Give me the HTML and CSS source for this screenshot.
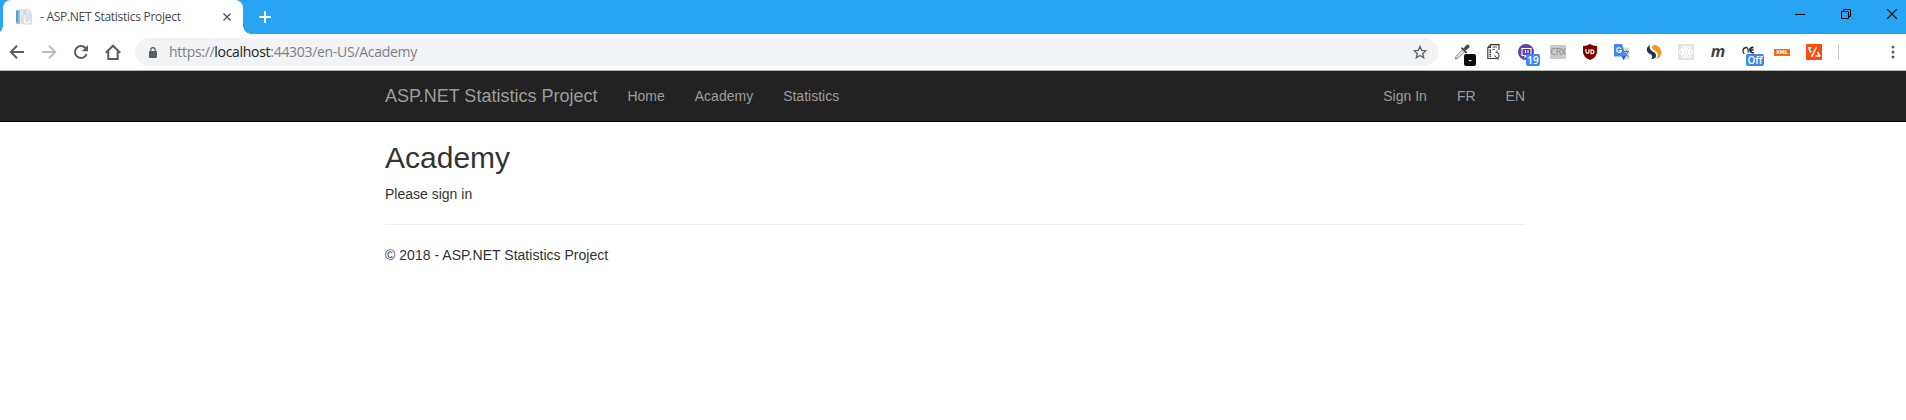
FILE: index.html
```html
<!DOCTYPE html>
<html lang="en">
<head>
<meta charset="utf-8">
<title>- ASP.NET Statistics Project</title>
<link rel="stylesheet" href="styles.css">
</head>
<body>
<div class="titlebar">
  <div class="tab">
    <svg class="favicon" width="16" height="16" viewBox="0 0 16 16"><path d="M0 1h4v14H0z" fill="#8fc0e0"/><path d="M0 2h2v11H0z" fill="#4f9fce"/><path d="M5 0h6l4 3v11H5z" fill="#e9edf1" stroke="#c3cbd3" stroke-width=".7"/><path d="M7 6h8v9H7z" fill="#f7f8fa" stroke="#b8c2cc" stroke-width=".7"/><path d="M7 2h3M7 4h4M9 8h5M9 10h5M9 12h4" stroke="#b3bdc7" stroke-width=".8"/></svg>
    <span class="tab-title">- ASP.NET Statistics Project</span>
    <svg class="tab-close" width="8" height="8" viewBox="0 0 8 8"><path d="M.5.5l7 7M7.5.5l-7 7" stroke="#505357" stroke-width="1.400"/></svg>
  </div>
  <svg class="new-tab" width="12" height="12" viewBox="0 0 12 12"><path d="M6 0v12M0 6h12" stroke="#fff" stroke-width="2"/></svg>
  <div class="window-controls">
    <svg width="10" height="10" viewBox="0 0 10 10"><path d="M0 5.500h10" stroke="#000"/></svg>
    <svg width="10" height="10" viewBox="0 0 10 10"><path d="M.5 2.500h7v7h-7zM2.500 2.500v-2h7v7h-2" fill="none" stroke="#000"/></svg>
    <svg width="10" height="10" viewBox="0 0 10 10"><path d="M0 0l10 10M10 0L0 10" stroke="#000" stroke-width="1.100"/></svg>
  </div>
</div>
<div class="toolbar">
  <div class="nav-buttons">
    <svg width="16" height="16" viewBox="0 0 16 16"><path d="M15 8H2M8 1.700L1.800 8 8 14.300" fill="none" stroke="#5a5d62" stroke-width="2"/></svg>
    <svg width="16" height="16" viewBox="0 0 16 16"><path d="M1 8h13M8 1.700L14.200 8 8 14.300" fill="none" stroke="#b9bbbe" stroke-width="2"/></svg>
    <svg width="16" height="16" viewBox="0 0 16 16"><path d="M13.600 10.200A6 6 0 1 1 12.300 3.800L13.500 5" fill="none" stroke="#5a5d62" stroke-width="2"/><path d="M15 1v6.200H8.800z" fill="#5a5d62"/></svg>
    <svg width="16" height="16" viewBox="0 0 16 16"><path d="M.8 8.800L8 1.700l7.200 7.100M3.300 7.500V15h9.400V7.500" fill="none" stroke="#5a5d62" stroke-width="2"/></svg>
  </div>
  <div class="omnibox">
    <svg width="8" height="11" viewBox="0 0 8 11"><rect y="4" width="8" height="7" rx="1" fill="#5a5d62"/><path d="M1.800 4.500V2.800a2.200 2.200 0 0 1 4.400 0v1.700" fill="none" stroke="#5a5d62" stroke-width="1.200"/></svg>
    <span class="url">https://<b>localhost</b>:44303/en-US/Academy</span>
    <svg class="star" width="14" height="14" viewBox="0 0 14 14"><path d="M7 1.400l1.700 3.900 4.200.4-3.200 2.800.95 4.200L7 10.500l-3.650 2.200.95-4.200L1.100 5.700l4.200-.4z" fill="none" stroke="#5a5d62" stroke-width="1.300"/></svg>
  </div>
  <div class="extensions">
    <div class="ext"><svg viewBox="0 0 16 16"><path d="M1.200 15l1-3L9 5.200 11 7.200 4.200 14z" fill="#e4e4e4" stroke="#888" stroke-width="1"/><path d="M8 3l5.500 5.500-1.500 1L7 4.500zM9.500 4.500L12.500 1q3-1.500 3 2L12 6.500z" fill="#444"/></svg><span class="badge badge-black">-</span></div>
    <div class="ext"><svg viewBox="0 0 16 16"><path d="M4.500.6H13V6M4.500.6L1.800 3.500v11H8M1.800 3.500h2.700V.6M8 14.500L13 15" fill="#fff" stroke="#333" stroke-width="1.100"/><path d="M4.200 5.500v7.500" stroke="#333" stroke-width="1.500" stroke-dasharray="1.500 .6"/><path d="M6.500 3h4.500M6.500 5.500H9M8.500 11.500l2 2.300q3 .2 2.500-2.800 0-2-2-2.500V6.500M9.500 8.500h1.500" fill="none" stroke="#555" stroke-width="1.100"/></svg></div>
    <div class="ext"><svg viewBox="0 0 16 16"><circle cx="8" cy="8" r="8" fill="#6441a4"/><path d="M4 4.500h9v5.300L11 11.500H8.500L7 13v-1.500H4z" fill="none" stroke="#fff" stroke-width="1.100"/><path d="M7.500 6.300V9M10 6.300V9" stroke="#fff" stroke-width="1.100"/></svg><span class="badge badge-blue">19</span></div>
    <div class="ext"><span class="crx">CRX</span></div>
    <div class="ext"><svg viewBox="0 0 16 16"><path d="M8 0q3 2 7 2v6q0 5-7 8-7-3-7-8V2q4 0 7-2z" fill="#800000"/><path d="M4 5.300v2.500a1.500 1.500 0 0 0 3 0V5.300M9 5.800h1a1.900 1.900 0 0 1 0 3.800H9z" fill="none" stroke="#fff" stroke-width="1.200"/></svg></div>
    <div class="ext"><svg viewBox="0 0 16 16"><path d="M8 3.500h7.500V15.500H9z" fill="#dcdcdc"/><path d="M10 7.500h5M12.500 6.500v1M14 7.500q-.5 3-3.500 5M11 8.500q1 3 3.500 4" fill="none" stroke="#65777d" stroke-width="1.100"/><path d="M7.500 12H12l-2.500 4z" fill="#2856b8"/><path d="M1 0h7l3.800 12.500H1q-1 0-1-1V1q0-1 1-1z" fill="#4285f4"/><path d="M7 4.800A2.300 2.300 0 1 0 7.300 6.500H5" fill="none" stroke="#fff" stroke-width="1.200"/></svg></div>
    <div class="ext"><svg viewBox="0 0 16 16"><path d="M4 1Q.5 3 .8 6c.4 3 2.700 3.400 4.200 4.500 1.800 1.300 1.500 3-.2 4.300C8 15.500 10.500 13.500 10 11c-.5-2.800-3.500-3.200-5.200-5C3.500 4.500 3.300 2.500 4 1z" fill="#263054"/><path d="M7.500 1.200c-2 .8-2 3.200-.2 4.600C9 7 11 7.500 11.500 9.700c.4 2-.2 3.800-1.300 5 3-.4 5.300-3 5.100-6.300C15 4 11.500.2 7.500 1.200z" fill="#f89a1c"/></svg></div>
    <div class="ext"><svg viewBox="0 0 16 16"><path d="M0 0h16v16H0z" fill="#e3e3e3"/><g fill="none" stroke="#fff" stroke-width="1.100"><ellipse cx="8" cy="8" rx="6.500" ry="2.600"/><ellipse cx="8" cy="8" rx="6.500" ry="2.600" transform="rotate(60 8 8)"/><ellipse cx="8" cy="8" rx="6.500" ry="2.600" transform="rotate(120 8 8)"/></g><circle cx="8" cy="8" r="1.200" fill="#fff"/></svg></div>
    <div class="ext"><span class="ext-m">m</span></div>
    <div class="ext"><svg viewBox="0 0 16 16"><path d="M5.500 3.500H4Q1 4 1 7q0 2 1.500 2.800M4.500 3.500q2.500 1.500 1.500 5" fill="none" stroke="#333" stroke-width="1.300"/><path d="M11.500 3.300Q7.500 3.500 8 6.500q1 2.500 4 2.500M7.500 6h4" fill="none" stroke="#222" stroke-width="1.700"/></svg><span class="badge badge-blue badge-off">Off</span></div>
    <div class="ext"><span class="xml">XML</span></div>
    <div class="ext"><svg viewBox="0 0 16 16"><rect width="16" height="16" rx="1" fill="#ff4a0d"/><path d="M5.500 3.800H2.500L5 8.500M10.500 3L5.500 12.800M11.500 8l2.200 4H9.500" fill="none" stroke="#fff" stroke-width="1.600" stroke-linejoin="round"/></svg></div>
  </div>
  <div class="separator"></div>
  <svg class="menu" width="4" height="14" viewBox="0 0 4 14"><g fill="#5a5d62"><circle cx="2" cy="2" r="1.500"/><circle cx="2" cy="7" r="1.500"/><circle cx="2" cy="12" r="1.500"/></g></svg>
</div>
<header class="navbar">
  <div class="container">
    <a class="brand">ASP.NET Statistics Project</a>
    <nav class="links"><a>Home</a><a>Academy</a><a>Statistics</a></nav>
    <nav class="links links-right"><a>Sign In</a><a>FR</a><a>EN</a></nav>
  </div>
</header>
<main class="content">
  <h2>Academy</h2>
  <p>Please sign in</p>
  <hr>
  <footer><p>© 2018 - ASP.NET Statistics Project</p></footer>
</main>
</body>
</html>
```
FILE: styles.css
```css
* { box-sizing: border-box; }
body { margin: 0; height: 420px; overflow: hidden; background: #fff; font: 14px/20px "Liberation Sans", Arial, sans-serif; color: #333; }
svg { display: block; flex: none; }

.titlebar { height: 34px; display: flex; background: #27a5f3; }
.tab { position: relative; width: 240px; margin-left: 3px; padding: 0 12px 0 13px; display: flex; align-items: center; background: #fff; border-radius: 8px 8px 0 0; }
.tab::before, .tab::after { content: ""; position: absolute; bottom: 0; width: 8px; height: 8px; }
.tab::before { left: -8px; background: radial-gradient(circle at 0 0, transparent 7.500px, #fff 8px); }
.tab::after { right: -8px; background: radial-gradient(circle at 100% 0, transparent 7.500px, #fff 8px); }
.tab-title { margin-left: 8px; font: 12px/16px "Open Sans", sans-serif; letter-spacing: -0.280px; color: #45494d; white-space: nowrap; }
.tab-close { margin-left: auto; }
.new-tab { margin: 11px 0 0 16px; }
.window-controls { display: flex; gap: 36px; margin: 9px 9px 0 auto; }

.toolbar { height: 37px; display: flex; align-items: center; border-bottom: 1px solid #b0b5b2; background: #fff; }
.nav-buttons { display: flex; gap: 16px; margin-left: 9px; }
.omnibox { width: 1303px; height: 28px; margin-left: 14px; padding: 0 11px 0 14px; border-radius: 14px; display: flex; align-items: center; background: #f1f3f4; }
.url { margin-left: 12px; font: 14px/20px "Open Sans", sans-serif; letter-spacing: -0.300px; color: #7c8085; white-space: nowrap; }
.url b { font-weight: 400; color: #202124; }
.star { margin-left: auto; }
.extensions { display: flex; gap: 16px; margin-left: 16px; }
.ext { position: relative; width: 16px; height: 16px; display: flex; align-items: center; justify-content: center; }
.ext > svg { width: 16px; height: 16px; }
.badge { position: absolute; top: 10px; right: -6px; height: 12px; border-radius: 2px; color: #fff; font: 600 10px/12px "Open Sans", sans-serif; text-align: center; }
.badge-blue { width: 14px; background: #4285f4; }
.badge-off { width: 18px; }
.badge-black { width: 12px; background: #0c0c0c; }
.crx { width: 16px; height: 14px; flex: none; display: flex; justify-content: center; border-radius: 1px; background: #c9c9c9; color: #888; font: 9px/14px "Open Sans", sans-serif; letter-spacing: -0.400px; }
.ext-m { font: italic 700 16px/16px "Open Sans", sans-serif; color: #444; transform: translateY(-1px); }
.xml { width: 16px; height: 7px; flex: none; display: flex; justify-content: center; background: #f26d15; color: #fff; font: 700 5px/7px "DejaVu Sans", sans-serif; }
.separator { width: 1px; height: 16px; margin-left: 16px; background: #c8cacc; }
.menu { margin: 0 11px 0 auto; }

.navbar { height: 51px; background: #222; border-bottom: 1px solid #080808; }
.container { width: 1140px; margin-left: 385px; display: flex; line-height: 20px; color: #9d9d9d; }
.brand { padding: 15px 15px 15px 0; font-size: 18px; }
.links { display: flex; }
.links a { padding: 15px; }
.links-right { margin: 0 -15px 0 auto; }

.content { width: 1140px; margin-left: 385px; padding-top: 19px; }
h2 { margin: 0 0 10px; font-size: 30px; line-height: 33px; font-weight: 500; }
p { margin: 0; }
footer { letter-spacing: 0.030px; }
hr { margin: 20px 0; border: 0; border-top: 1px solid #eee; }
```
